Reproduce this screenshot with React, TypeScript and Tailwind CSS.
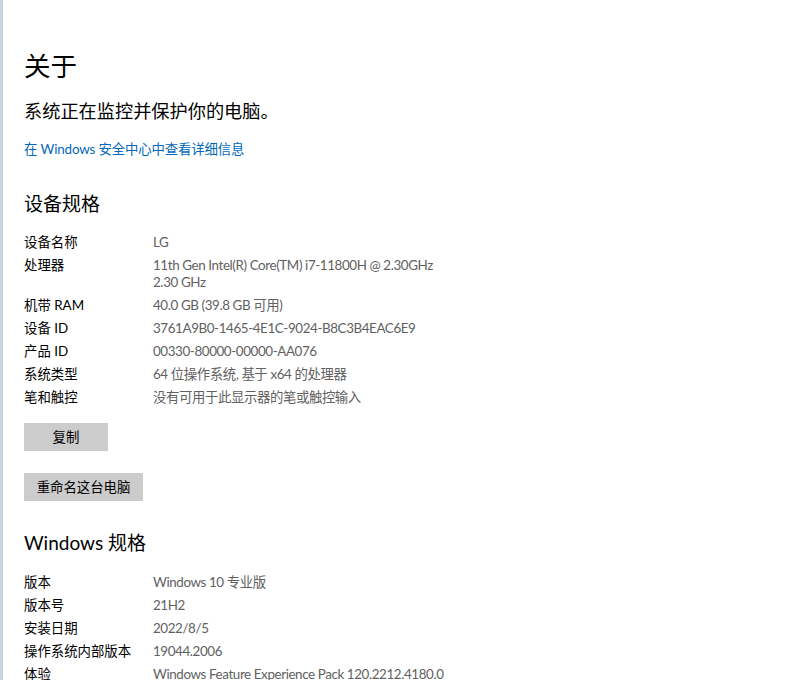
import React from 'react';

// ===============================================
// DATA
// ===============================================

type SpecRow = { label: string; value: string[] };

const deviceSpecs: SpecRow[] = [
  { label: '设备名称', value: ['LG'] },
  { label: '处理器', value: ['11th Gen Intel(R) Core(TM) i7-11800H @ 2.30GHz', '2.30 GHz'] },
  { label: '机带 RAM', value: ['40.0 GB (39.8 GB 可用)'] },
  { label: '设备 ID', value: ['3761A9B0-1465-4E1C-9024-B8C3B4EAC6E9'] },
  { label: '产品 ID', value: ['00330-80000-00000-AA076'] },
  { label: '系统类型', value: ['64 位操作系统, 基于 x64 的处理器'] },
  { label: '笔和触控', value: ['没有可用于此显示器的笔或触控输入'] },
];

const windowsSpecs: SpecRow[] = [
  { label: '版本', value: ['Windows 10 专业版'] },
  { label: '版本号', value: ['21H2'] },
  { label: '安装日期', value: ['2022/8/5'] },
  { label: '操作系统内部版本', value: ['19044.2006'] },
  { label: '体验', value: ['Windows Feature Experience Pack 120.2212.4180.0'] },
];

// ===============================================
// PIECES
// ===============================================

function SpecTable({ rows }: { rows: SpecRow[] }) {
  return (
    <div className="flex flex-col gap-[6px]">
      {rows.map((row) => (
        <div key={row.label} className="flex text-[13.4px] leading-[17px]">
          <div className="w-[129px] shrink-0 text-black">{row.label}</div>
          <div className="text-[#616161] tracking-[-0.4px]">
            {row.value.map((line) => (
              <div key={line} className="whitespace-nowrap">
                {line}
              </div>
            ))}
          </div>
        </div>
      ))}
    </div>
  );
}

function GrayButton({ children, width }: { children: React.ReactNode; width: string }) {
  return (
    <button
      className={`${width} h-[28px] bg-[#cccccc] text-[13.4px] text-black flex items-center justify-center`}
    >
      {children}
    </button>
  );
}

// ===============================================
// MAIN
// ===============================================

export default function App() {
  return (
    <div
      className="w-[800px] h-[680px] overflow-hidden bg-white flex"
      style={{ fontFamily: 'Lato, "Noto Sans CJK SC", sans-serif' }}
    >
      {/* left window edge */}
      <div className="w-[3px] shrink-0 bg-[#c6d6dc]" />

      <div className="flex-1 flex flex-col">
        {/* top progress strip */}
        <div className="h-[2px] flex pl-[387px]">
          <div className="w-[45px] bg-[#1e6fc4]" />
          <div className="w-[182px] bg-[#e6e6e6]" />
        </div>

        <div className="pl-[21px] flex flex-col">
          <h1 className="mt-[48px] text-[26.5px] leading-[36px] text-black">关于</h1>
          <p className="mt-[13px] text-[18.2px] leading-[28px] text-black">系统正在监控并保护你的电脑。</p>
          <a className="mt-[14px] text-[13.4px] leading-[20px] text-[#0067b8] tracking-[-0.15px]">
            在 Windows 安全中心中查看详细信息
          </a>

          <h2 className="mt-[31px] text-[19px] leading-[28px] text-black">设备规格</h2>
          <div className="mt-[16px]">
            <SpecTable rows={deviceSpecs} />
          </div>

          <div className="mt-[17px] flex flex-col gap-[22px] items-start">
            <GrayButton width="w-[84px]">复制</GrayButton>
            <GrayButton width="w-[119px]">重命名这台电脑</GrayButton>
          </div>

          <h2 className="mt-[28px] text-[19px] leading-[28px] text-black">Windows 规格</h2>
          <div className="mt-[17px]">
            <SpecTable rows={windowsSpecs} />
          </div>
        </div>
      </div>
    </div>
  );
}
